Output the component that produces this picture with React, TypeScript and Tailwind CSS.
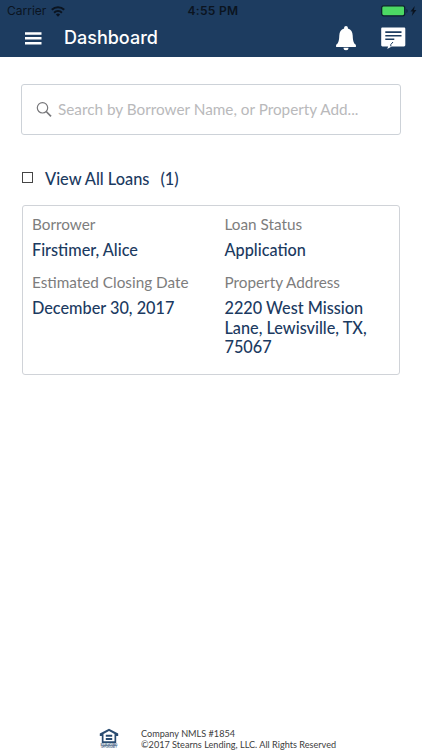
import React from "react";

function Field({ label, children }: { label: string; children: React.ReactNode }) {
  return (
    <div>
      <div className="h-[22px] whitespace-nowrap text-[15.3px] leading-[22px] text-[#7d7d7d]">{label}</div>
      <div className="mt-[5px] whitespace-pre text-[16.25px] font-medium leading-[19.5px] text-[#1b3a61]">{children}</div>
    </div>
  );
}

function StatusBar() {
  return (
    <div className="grid h-[22px] grid-cols-3 items-center font-['Inter','Liberation_Sans',sans-serif] text-[12px] leading-[22px] text-[#0b1420]">
      <div className="flex items-center pl-[7px]">
        <span>Carrier</span>
        <svg className="ml-[5px]" width="14" height="11" viewBox="0 0 14 11" fill="none" stroke="currentColor" strokeWidth="2">
          <path d="M.8 3.8a8.8 8.8 0 0 1 12.4 0M3.1 6.7a5.5 5.5 0 0 1 7.8 0" />
          <path d="M4.9 8.6a3 3 0 0 1 4.2 0L7 10.8z" fill="currentColor" stroke="none" />
        </svg>
      </div>
      <div className="pl-[4px] text-center font-semibold tracking-[0.3px]">4:55 PM</div>
      <div className="flex items-center justify-end pr-[5px]">
        <svg width="36" height="12" viewBox="0 0 36 12">
          <rect x=".7" y=".8" width="23" height="10" rx="2" fill="#4cd964" stroke="#0b1d2e" strokeWidth="1.2" />
          <path d="M25.4 4v4c1.7-.5 1.7-3.5 0-4" fill="#10243b" />
          <path d="M33.7 1 29.5 6.5h2.3L30.8 11l4.6-6h-2.4z" fill="#0b1420" />
        </svg>
      </div>
    </div>
  );
}

export default function App() {
  return (
    <div className="flex h-[750px] w-[422px] flex-col bg-white font-['Lato','Carlito',sans-serif]">
      <header className="h-[57px] bg-[#1d3c60]">
        <StatusBar />
        <div className="flex h-[32px] items-center pl-[25px] pr-[16px]">
          <svg width="17" height="13" viewBox="0 0 17 13" fill="white">
            <path d="M0 .2h16.500v2.500H0zM0 5.100h16.500v2.500H0zM0 9.900h16.500v2.500H0z" />
          </svg>
          <h1 className="ml-[22px] font-['Inter','Liberation_Sans',sans-serif] text-[18px] font-medium leading-[30px] text-white">Dashboard</h1>
          <svg className="ml-auto" width="22" height="25" viewBox="0 0 22 25" fill="white">
            <path d="M11 0c1.100 0 1.900.8 1.900 1.900v.5c3.300.8 4.600 3.500 4.800 7.100.2 5 .8 8.100 3.200 9.200V21H1.100v-2.300c2.400-1.100 3-4.200 3.200-9.200.2-3.600 1.500-6.300 4.800-7.100v-.5C9.100.8 9.900 0 11 0M8.500 21.800h5a2.500 2.500 0 0 1-5 0" />
          </svg>
          <svg className="ml-[24px]" width="25" height="23" viewBox="0 0 25 23">
            <path d="M1.500.5h21.500c.8 0 1.300.5 1.300 1.300v16.300c0 .7-.5 1.300-1.300 1.300H10.800L6.200 22l1-2.600H1.500C.7 19.400.2 18.800.2 18.100V1.800C.2 1 .7.5 1.500.5" fill="white" />
            <path d="M4.300 5.100h16.200M4.300 8.700h16.200M4.300 12.300h9" stroke="#1d3c60" strokeWidth="1.600" />
            <path d="m12 15-2.200 2.500v1.900" fill="none" stroke="#1d3c60" strokeWidth="1" />
          </svg>
        </div>
      </header>
      <main className="flex-1 px-[21px] pt-[27px]">
        <div className="flex h-[51px] w-[380px] items-center rounded-[3px] border border-[#cdd2d8] pl-[14px]">
          <svg width="16" height="16" viewBox="0 0 16 16" fill="none" stroke="#77777a">
            <circle cx="6.500" cy="5.800" r="5.200" strokeWidth="1.200" />
            <path d="m10.200 9.500 4.800 4.800" strokeWidth="1.700" />
          </svg>
          <span className="ml-[6px] whitespace-nowrap text-[15.3px] text-[#b9b9bb]">Search by Borrower Name, or Property Add...</span>
        </div>
        <div className="mt-[32px] flex h-[24px] items-center">
          <span className="mb-[4px] ml-[1px] h-[11px] w-[11px] border border-[#454545]" />
          <span className="ml-[12px] text-[16.35px] font-medium text-[#1b3a61]">View All Loans</span>
          <span className="ml-[11px] text-[16.35px] font-medium text-[#1b3a61]">(1)</span>
        </div>
        <section className="ml-[1px] mt-[14px] grid h-[170px] w-[378px] grid-cols-[192.5px_1fr] grid-rows-[58px_1fr] rounded-[3px] border border-[#d0d3d8] pl-[9px] pt-[7px]">
          <Field label="Borrower">Firstimer, Alice</Field>
          <Field label="Loan Status">Application</Field>
          <Field label="Estimated Closing Date">December 30, 2017</Field>
          <Field label="Property Address">{"2220 West Mission\nLane, Lewisville, TX,\n75067"}</Field>
        </section>
      </main>
      <footer className="flex h-[23px] items-start pl-[99px]">
        <svg className="mt-[1px]" width="20" height="21" viewBox="0 0 20 21">
          <path fillRule="evenodd" d="M10 .8 19.200 5.500V8h-2v7H2.800V8h-2V5.500zM10 3.100 4.500 6v7.200h11V6z" fill="#294b70" />
          <path d="M6.800 6.800h6.400v1.900H6.800zM6.800 10h6.400v1.900H6.800z" fill="#294b70" />
          <text x="10" y="17.700" textAnchor="middle" textLength="17" fontSize="2.800" fill="#55708f" fontFamily="Liberation Sans" fontWeight="bold">EQUAL HOUSING</text>
          <text x="10" y="20.300" textAnchor="middle" textLength="16" fontSize="2.800" fill="#55708f" fontFamily="Liberation Sans" fontWeight="bold">OPPORTUNITY</text>
        </svg>
        <div className="ml-[22px] mt-[1px] whitespace-nowrap text-[9.130px] leading-[11px] text-[#3d3d3d]">
          <div>Company NMLS #1854</div>
          <div>©2017 Stearns Lending, LLC. All Rights Reserved</div>
        </div>
      </footer>
    </div>
  );
}
